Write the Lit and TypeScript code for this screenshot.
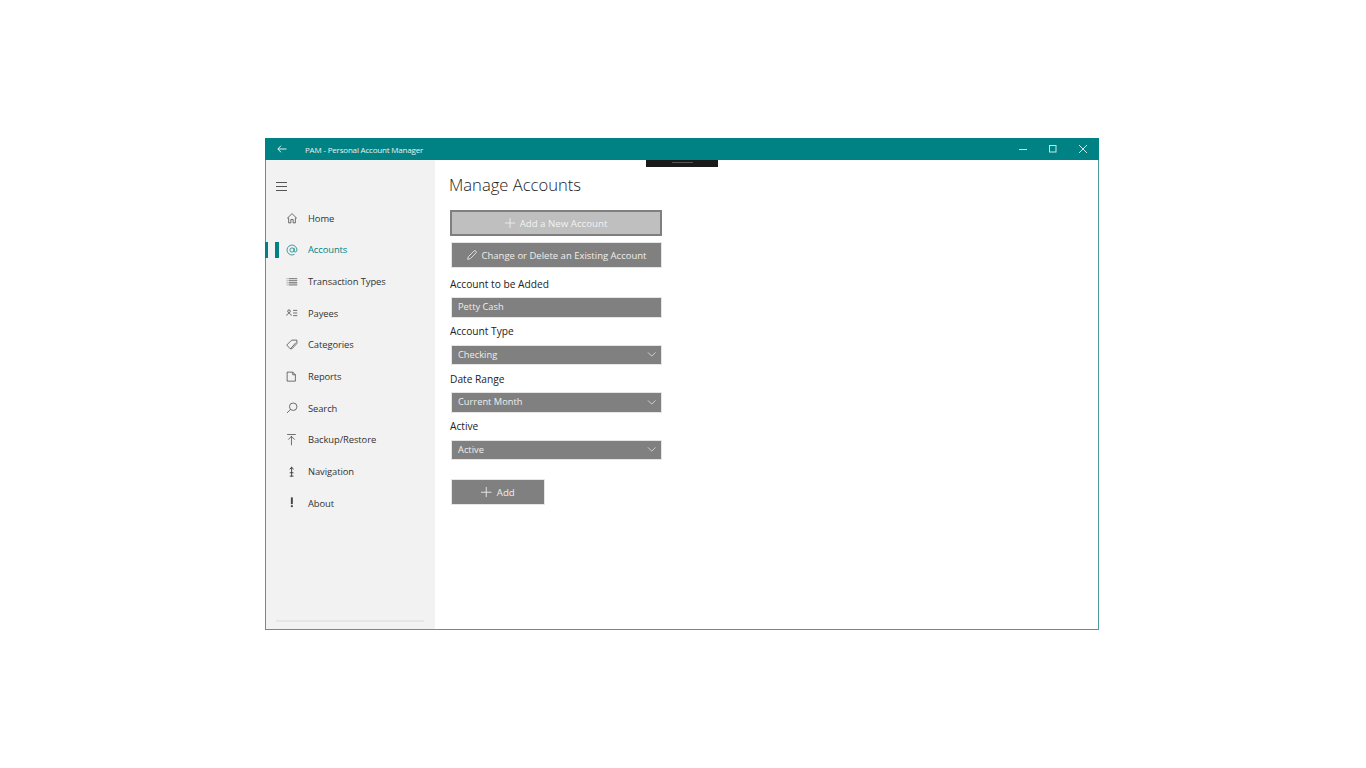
import { LitElement, html, css, svg } from "lit";
import { customElement } from "lit/decorators.js";

const s = (c: unknown) => html`<svg class="ic" viewBox="0 0 16 16" fill="none" stroke="currentColor" stroke-width="1">${c}</svg>`;
const icons: Record<string, unknown> = {
  home: s(svg`<path d="M3.5 7.5V14.5H6.5V10H9.5V14.5H12.5V7.5M1.5 8.5L8 2.2L14.5 8.5"/>`),
  at: s(svg`<circle cx="8" cy="8" r="2.8"/><path d="M10.8 5V9.4C10.8 11.4 14.6 11.4 14.6 8A6.6 6.6 0 1 0 11.4 13.7"/>`),
  list: s(svg`<path stroke-width="1.7" d="M.5 3.4H4M.5 6.2H4M.5 9H4M.5 11.8H4" opacity=".25"/><path stroke-width="1.7" d="M4 3.4H15M4 6.2H15M4 9H15M4 11.8H15" opacity=".6"/>`),
  payee: s(svg`<circle cx="4" cy="5.6" r="1.8"/><path d="M1 11.5C1.2 7.8 6.8 7.8 7 11.5M9.5 4.5H15M9.5 8H15M9.5 11.5H15"/>`),
  tag: s(svg`<path d="M1 8L7.5 1.5H14.5V6L8 13H5.5Z"/><path d="M6.5 12.5L13 5"/>`),
  doc: s(svg`<path d="M1.5 1.5H9L12.5 5V13.5H1.5ZM9 1.5V5H12.5"/>`),
  search: s(svg`<circle cx="9.6" cy="6.3" r="5"/><path d="M6 9.9L1.3 14.7"/>`),
  backup: s(svg`<path d="M1.5 .7H13M7.3 15V3M3 7.5L7.3 3L11.6 7.5"/>`),
  nav: s(svg`<path d="M7.5 1V14M5 4.5L7.5 1.5L10 4.5M5 9H10M5 13.5H10" stroke-width="1.3"/>`),
  about: html`<svg class="ic" viewBox="0 0 16 16" fill="currentColor"><rect x="6.5" y=".5" width="2.6" height="9"/><rect x="6.5" y="11" width="2.6" height="2.5"/></svg>`,
};
const plus = html`<svg class="bi" viewBox="0 0 12 12" fill="none" stroke="currentColor"><path d="M6 0V12M0 6H12"/></svg>`;
const pen = html`<svg class="bi" viewBox="0 0 12 12" fill="none" stroke="currentColor"><path d="M.8 11.2L1.6 8L8.6 1.1C10 0 12 2 10.9 3.4L4 10.4Z"/></svg>`;
const chev = html`<svg class="chev" viewBox="0 0 10 6" fill="none" stroke="currentColor"><path d="M.5 .5L5 5L9.5 .5"/></svg>`;

const nav = [
  ["home", "Home"], ["at", "Accounts"], ["list", "Transaction Types"], ["payee", "Payees"], ["tag", "Categories"],
  ["doc", "Reports"], ["search", "Search"], ["backup", "Backup/Restore"], ["nav", "Navigation"], ["about", "About"],
];

@customElement("app-root")
export class AppRoot extends LitElement {
  static styles = css`
    :host { display: block; width: 1366px; height: 768px; background: #fff; padding: 138px 0 0 265px; box-sizing: border-box; font-family: "Open Sans", "Noto Sans", sans-serif; font-size: 10px; color: #222; }
    .win { width: 834px; height: 492px; box-sizing: border-box; border: 1px solid #4a9c9c; border-top: 0; display: flex; flex-direction: column; position: relative; }
    .title { height: 22px; margin: 0 -1px; background: #008285; color: #e6f3f3; display: flex; align-items: center; flex: none; }
    .back { width: 10px; height: 8px; margin-left: 12px; }
    .apptitle { margin-left: 18px; font-size: 8px; letter-spacing: -0.19px; flex: 1; }
    .ctl { width: 10px; height: 10px; margin-right: 20px; color: #cfe6e6; }
    .ctl:last-child { margin-right: 11px; }
    .grip { position: absolute; left: 380px; top: 22px; width: 72px; height: 7px; background: #1a1a1a; display: flex; justify-content: center; padding-top: 2px; box-sizing: border-box; }
    .grip i { display: block; width: 21px; height: 1px; background: #555; }
    .body { flex: 1; display: flex; min-height: 0; }
    .side { width: 169px; background: #f2f2f2; display: flex; flex-direction: column; flex: none; }
    .ham { width: 11px; height: 7px; margin: 22px 0 0 10px; border-top: 1px solid #555; border-bottom: 1px solid #555; position: relative; box-sizing: content-box; flex: none; }
    .ham::after { content: ""; position: absolute; left: 0; right: 0; top: 3px; height: 1px; background: #555; }
    .nav { margin-top: 11.5px; display: flex; flex-direction: column; }
    .item { height: 31.67px; display: flex; align-items: center; position: relative; padding-left: 20px; color: #333; }
    .ic { width: 12px; height: 12px; flex: none; color: #444; }
    .item span { margin-left: 10px; font-size: 9.4px; letter-spacing: -0.08px; }
    .item.on { color: #008285; }
    .item.on .ic { color: #008285; }
    .item.on::before { content: ""; position: absolute; left: -1px; top: 8px; width: 3px; height: 16px; background: #008285; }
    .item.on::after { content: ""; position: absolute; left: 9px; top: 8px; width: 4px; height: 16px; background: #008285; }
    .rule { margin: auto 11px 7px 10px; height: 2px; background: #e6e6e6; flex: none; }
    .main { flex: 1; padding: 14px 0 0 14px; }
    h1 { margin: 0 0 13.5px; font-weight: 300; font-size: 16.6px; line-height: 22px; color: #1c1c1c; }
    .col { width: 212px; display: flex; flex-direction: column; margin-left: 1px; }
    .btn { height: 26px; box-sizing: border-box; background: #808080; color: #eee; border: 1px solid #e6e6e6; display: flex; align-items: center; justify-content: center; gap: 5px; font-size: 9.5px; margin-left: 1px; }
    .btn.sel { height: 26.5px; margin: 0 0 6px; background: #bfbfbf; border: 2px solid #7f7f7f; color: #f2f2f2; font-size: 9.7px; padding-top: 1px; }
    .bi { width: 10px; height: 10px; flex: none; }
    label { display: block; font-size: 10.2px; line-height: 14px; margin: 6.5px 0; color: #222; }
    label.first { margin-top: 9px; margin-bottom: 6px; }
    .fld { height: 20.5px; box-sizing: border-box; margin-left: 1px; background: #808080; color: #eee; border: 1px solid #e6e6e6; display: flex; align-items: center; justify-content: space-between; padding: 0 5px 1px 6px; font-size: 9.3px; }
    .chev { width: 9.5px; height: 5px; color: #ddd; margin-top: 1px; }
    .add { width: 94px; margin-top: 19px; font-size: 9.7px; }
    .add .bi { width: 10.5px; height: 10.5px; }
  `;
  render() {
    return html`<div class="win">
      <div class="title">
        <svg class="back" viewBox="0 0 10 8" fill="none" stroke="currentColor"><path d="M9.5 4H1M4 .7L.8 4L4 7.3"/></svg>
        <div class="apptitle">PAM - Personal Account Manager</div>
        <svg class="ctl" viewBox="0 0 10 10" fill="none" stroke="currentColor"><path d="M1 5.5H9"/></svg>
        <svg class="ctl" viewBox="0 0 10 10" fill="none" stroke="currentColor"><rect x="1.5" y="1.5" width="6.5" height="6.5"/></svg>
        <svg class="ctl" viewBox="0 0 10 10" fill="none" stroke="currentColor"><path d="M1 1L9 9M9 1L1 9"/></svg>
      </div>
      <div class="grip"><i></i></div>
      <div class="body">
        <aside class="side">
          <div class="ham"></div>
          <div class="nav">
            ${nav.map(([k, t]) => html`<div class="item ${k === "at" ? "on" : ""}">${icons[k]}<span>${t}</span></div>`)}
          </div>
          <div class="rule"></div>
        </aside>
        <main class="main">
          <h1>Manage Accounts</h1>
          <div class="col">
            <div class="btn sel">${plus}Add a New Account</div>
            <div class="btn">${pen}Change or Delete an Existing Account</div>
            <label class="first">Account to be Added</label>
            <div class="fld">Petty Cash</div>
            <label>Account Type</label>
            <div class="fld">Checking${chev}</div>
            <label>Date Range</label>
            <div class="fld">Current Month${chev}</div>
            <label>Active</label>
            <div class="fld">Active${chev}</div>
            <div class="btn add">${plus}Add</div>
          </div>
        </main>
      </div>
    </div>`;
  }
}
